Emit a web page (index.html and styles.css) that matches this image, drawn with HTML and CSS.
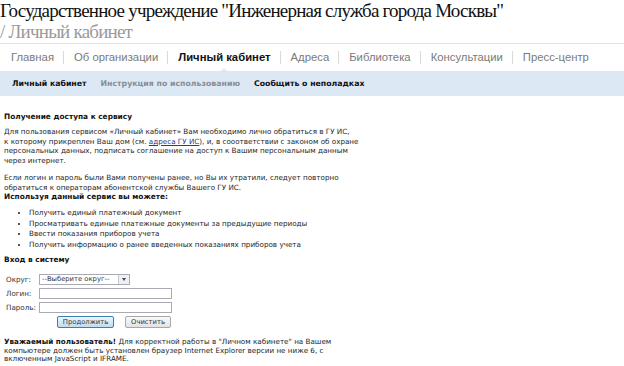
FILE: index.html
```html
<!DOCTYPE html>
<html lang="ru">
    <head>
        <meta charset="UTF-8" />
        <title>Личный кабинет | ГУ ИС</title>
        <link rel="stylesheet" href="styles.css">
    </head>
    <body>
        <header class="site-head">
            <div class="site-title">Государственное учреждение "Инженерная служба города Москвы"</div>
            <div class="crumb">/ Личный кабинет</div>
        </header>
        <nav class="main-nav">
            <a href="#">Главная</a>
            <a href="#">Об организации</a>
            <a href="#" class="active">Личный кабинет</a>
            <a href="#">Адреса</a>
            <a href="#">Библиотека</a>
            <a href="#">Консультации</a>
            <a href="#">Пресс-центр</a>
        </nav>
        <nav class="sub-nav">
            <a href="#" class="current">Личный кабинет</a>
            <a href="#" class="muted">Инструкция по использованию</a>
            <a href="#">Сообщить о неполадках</a>
        </nav>
        <main class="content">
            <h3>Получение доступа к сервису</h3>
            <p class="intro">
                Для пользования сервисом «Личный кабинет» Вам необходимо лично обратиться в ГУ ИС,<br />
                к которому прикреплен Ваш дом (см. <a href="#">адреса ГУ ИС</a>), и, в сооответствии с законом об охране<br />
                персональных данных, подписать соглашение на доступ к Вашим персональным данным<br />
                через интернет.
            </p>
            <p class="lost">
                Если логин и пароль были Вами получены ранее, но Вы их утратили, следует повторно<br />
                обратиться к операторам абонентской службы Вашего ГУ ИС.
            </p>
            <h3>Используя данный сервис вы можете:</h3>
            <ul class="features">
                <li>Получить единый платежный документ</li>
                <li>Просматривать единые платежные документы за предыдущие периоды</li>
                <li>Ввести показания приборов учета</li>
                <li>Получить информацию о ранее введенных показаниях приборов учета</li>
            </ul>
            <h3>Вход в систему</h3>
            <form class="login" autocomplete="off">
                <label for="district">Округ:</label>
                <div class="select" id="district">
                    <span>--Выберите округ--</span>
                    <i class="arrow"></i>
                </div>
                <label for="login">Логин:</label>
                <input id="login" type="text" />
                <label for="pass">Пароль:</label>
                <input id="pass" type="password" />
                <div class="buttons">
                    <button type="submit" class="primary">Продолжить</button>
                    <button type="reset">Очистить</button>
                </div>
            </form>
            <p class="notice">
                <b>Уважаемый пользователь!</b> Для корректной работы в "Личном кабинете" на Вашем<br />
                компьютере должен быть установлен браузер Internet Explorer версии не ниже 6, с<br />
                включенным JavaScript и IFRAME.
            </p>
        </main>
    </body>
</html>
```

FILE: styles.css
```css
html,
body {
    margin: 0;
    background: #fff;
    color: #111;
}
a {
    text-decoration: none;
}
.site-head {
    font-family: "Liberation Serif", "Times New Roman", serif;
    font-size: 19px;
    line-height: 21px;
    letter-spacing: -0.78px;
}
.site-title {
    color: #111;
}
.crumb {
    color: #9a9a9a;
}
.main-nav {
    display: flex;
    align-items: center;
    margin-top: 1px;
    border-top: 1px solid #e2e2e2;
    padding: 7px 0 7px 2px;
    font-family: "Liberation Sans", Arial, sans-serif;
    font-size: 11.3px;
    line-height: 15px;
}
.main-nav a {
    color: #7a7a7a;
    padding: 0 9px 0 10px;
    border-left: 1px solid #dadada;
    line-height: 13px;
}
.main-nav a:first-child {
    border-left: none;
    padding-left: 9px;
}
.main-nav a.active {
    position: relative;
    color: #111;
    font-weight: bold;
}
/* уголок над подменю */
.main-nav a.active::after {
    content: "";
    position: absolute;
    left: 50%;
    bottom: -8px;
    margin-left: -4px;
    border: 4px solid transparent;
    border-bottom: 4px solid #dce9f5;
    border-top: none;
}
.sub-nav {
    display: flex;
    gap: 14px;
    background: #dce9f5;
    padding: 0 12px;
    height: 25px;
    align-items: center;
    font-family: "DejaVu Sans", Verdana, sans-serif;
    font-size: 7.8px;
    font-weight: bold;
}
.sub-nav a {
    color: #111;
}
.sub-nav a.muted {
    color: #8a8c96;
}
.content {
    padding: 16px 4px 0 4px;
    font-family: "DejaVu Sans", Verdana, sans-serif;
    font-size: 7.2px;
    line-height: 9.5px;
    color: #1e1e1e;
}
.content h3 {
    margin: 0;
    font-size: 7.4px;
    line-height: 10px;
    font-weight: bold;
    color: #111;
}
.content p {
    margin: 0;
}
.intro {
    padding-top: 5px;
}
.lost {
    padding-top: 8px;
}
.content p a {
    color: #2b3a8c;
    text-decoration: underline;
}
.features {
    margin: 0;
    padding: 6px 0 5px 25px;
    line-height: 10.5px;
}
.login {
    display: grid;
    grid-template-columns: 33px auto;
    justify-content: start;
    align-items: center;
    row-gap: 3px;
    margin: 9px 0 0 2px;
}
.login label {
    color: #333;
    line-height: 11px;
}
.select {
    display: flex;
    align-items: center;
    justify-content: space-between;
    width: 87px;
    height: 9px;
    border: 1px solid #a9aab4;
    padding-left: 2px;
    color: #333;
    font-size: 6.8px;
}
.arrow {
    width: 10px;
    height: 9px;
    border-left: 1px solid #c8cad4;
    background: #eef0f4;
    display: flex;
    align-items: center;
    justify-content: center;
}
.arrow::before {
    content: "";
    border: 2.5px solid transparent;
    border-top: 3px solid #445;
    border-bottom: none;
}
.login input {
    box-sizing: border-box;
    width: 133px;
    height: 11px;
    border: 1px solid #a9aab4;
    padding: 0 2px;
    font-size: 7px;
    margin: 0;
}
.buttons {
    grid-column: 2;
    display: flex;
    gap: 11px;
    padding-left: 18px;
}
.buttons button {
    box-sizing: border-box;
    height: 12px;
    width: 46px;
    padding: 0;
    border: 1px solid #a8a8a8;
    border-radius: 2px;
    background: linear-gradient(#fafafa, #e2e2e2);
    font-family: "DejaVu Sans", Verdana, sans-serif;
    font-size: 6.8px;
    color: #333;
}
.buttons button.primary {
    width: 57px;
    border-color: #3c7fb1;
    background: linear-gradient(#eaf6fd, #bedcf2);
}
.content .notice {
    margin-top: 10px;
    line-height: 8.5px;
}
.notice b {
    color: #111;
}
```
